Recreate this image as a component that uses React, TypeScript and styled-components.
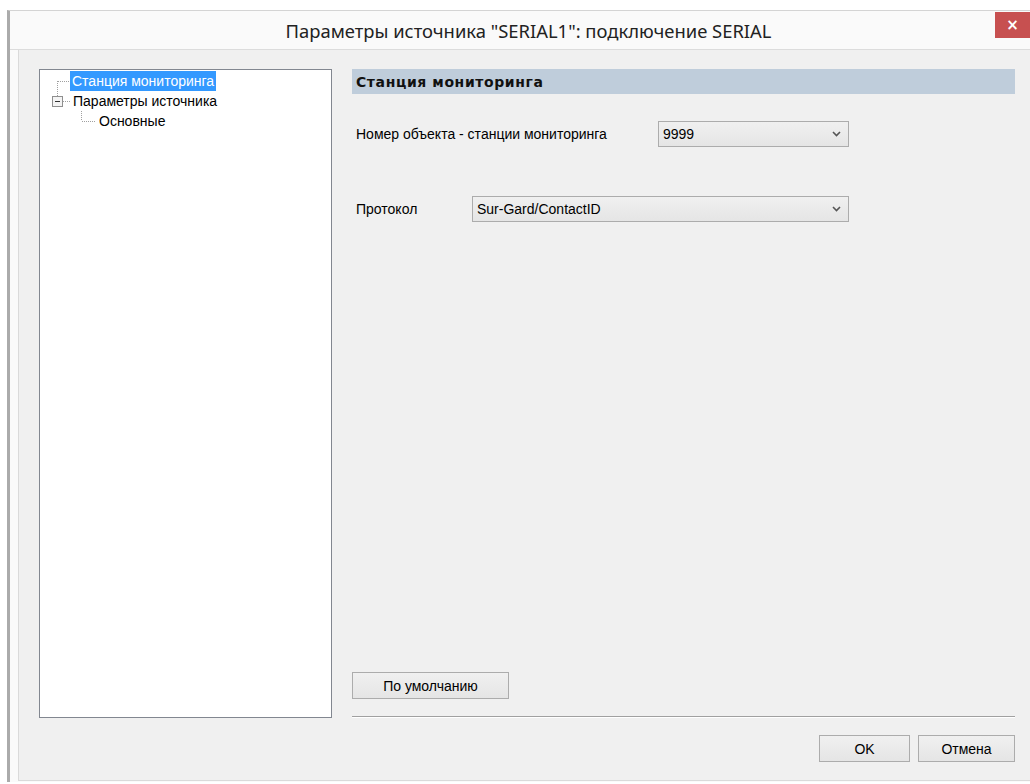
import styled, { createGlobalStyle } from "styled-components";

const GlobalStyle = createGlobalStyle`
  html, body {
    margin: 0;
    padding: 0;
    background: #ffffff;
  }
  body {
    font-family: "Liberation Sans", Arial, sans-serif;
    font-size: 14px;
    color: #000;
  }
`;

const Frame = styled.div`
  margin: 10px 0 0 7px;
  height: 771px;
  display: flex;
  flex-direction: column;
  border-left: 3px solid #ababab;
  border-top: 1px solid #d4d4d4;
  background: #fafafa;
  overflow: hidden;
`;

const TitleBar = styled.div`
  height: 38px;
  display: flex;
  align-items: flex-start;
  border-bottom: 1px solid #dcdcdc;
  background: #fafafa;
`;

const Title = styled.div`
  flex: 1;
  text-align: center;
  padding-left: 52px;
  line-height: 40px;
  font-family: "Noto Sans", "Open Sans", sans-serif;
  font-size: 18.4px;
  color: #222;
`;

const CloseButton = styled.div`
  width: 35px;
  height: 26px;
  margin-top: 1px;
  background: #c75050;
  color: #fff;
  display: flex;
  align-items: center;
  justify-content: center;
  font-family: "DejaVu Sans", sans-serif;
  font-size: 15px;
  font-weight: bold;
`;

const Body = styled.div`
  flex: 1;
  display: flex;
  padding: 0 0 1px 8px;
`;

const Panel = styled.div`
  flex: 1;
  display: grid;
  grid-template-columns: 293px 663px;
  grid-template-rows: 649px auto;
  column-gap: 20px;
  padding: 19px 0 0 20px;
  background: #f0f0f0;
  border-left: 1px solid #dadada;
  border-bottom: 1px solid #dadada;
`;

const Tree = styled.div`
  background: #fff;
  border: 1px solid #828790;
  padding: 1px 0 0 8px;
`;

const TreeRow = styled.div<{ $level: number }>`
  display: flex;
  align-items: center;
  height: 20px;
  padding-left: ${({ $level }) => $level * 22}px;
`;

const Connector = styled.svg`
  flex: none;
  display: block;
`;

const Label = styled.span<{ $selected?: boolean }>`
  padding: 0 2px 0 ${({ $selected }) => ($selected ? 2 : 3)}px;
  line-height: 20px;
  background: ${({ $selected }) => ($selected ? "#3399ff" : "transparent")};
  color: ${({ $selected }) => ($selected ? "#fff" : "#000")};
`;

const Content = styled.div`
  display: flex;
  flex-direction: column;
`;

const SectionHeader = styled.div`
  height: 25px;
  background: #bfcddb;
  padding-left: 4px;
  line-height: 26px;
  font-family: "DejaVu Sans", Verdana, sans-serif;
  font-size: 14px;
  letter-spacing: 0.6px;
  font-weight: bold;
  color: #111;
`;

const FieldRow = styled.div<{ $top: number }>`
  width: 497px;
  margin-top: ${({ $top }) => $top}px;
  display: flex;
  align-items: center;
  justify-content: space-between;
`;

const FieldLabel = styled.span`
  padding-left: 4px;
`;

const Combo = styled.div<{ $width: number }>`
  width: ${({ $width }) => $width}px;
  height: 26px;
  box-sizing: border-box;
  border: 1px solid #acacac;
  background: linear-gradient(#f0f0f0, #e5e5e5);
  display: flex;
  align-items: center;
  justify-content: space-between;
  padding: 0 7px 0 4px;
`;

const Spacer = styled.div`
  flex: 1;
`;

const Button = styled.div<{ $width: number }>`
  width: ${({ $width }) => $width}px;
  height: 27px;
  box-sizing: border-box;
  border: 1px solid #acacac;
  background: linear-gradient(#f0f0f0, #e5e5e5);
  display: flex;
  align-items: center;
  justify-content: center;
`;

const Separator = styled.div`
  margin-top: 17px;
  border-top: 1px solid #a0a0a0;
  border-bottom: 1px solid #fff;
`;

const Footer = styled.div`
  grid-column: 2;
  display: flex;
  justify-content: flex-end;
  gap: 8px;
  padding-top: 17px;
`;

const Chevron = () => (
  <svg width="9" height="6" viewBox="0 0 9 6">
    <path d="M1 1 L4.5 4.5 L8 1" fill="none" stroke="#555" strokeWidth="1.6" />
  </svg>
);

const dots = "1 1";

export default function App() {
  return (
    <>
      <GlobalStyle />
      <Frame>
        <TitleBar>
          <Title>Параметры источника "SERIAL1": подключение SERIAL</Title>
          <CloseButton>×</CloseButton>
        </TitleBar>
        <Body>
          <Panel>
            <Tree>
              <TreeRow $level={0}>
                <Connector width="22" height="20">
                  <line x1="9.5" y1="10" x2="9.5" y2="20" stroke="#a0a0a0" strokeDasharray={dots} />
                  <line x1="10" y1="10.5" x2="22" y2="10.5" stroke="#a0a0a0" strokeDasharray={dots} />
                </Connector>
                <Label $selected>Станция мониторинга</Label>
              </TreeRow>
              <TreeRow $level={0}>
                <Connector width="22" height="20">
                  <line x1="9.5" y1="0" x2="9.5" y2="5" stroke="#a0a0a0" strokeDasharray={dots} />
                  <rect x="4.5" y="5.5" width="10" height="10" fill="#f4f4f4" stroke="#8f8f8f" />
                  <line x1="7" y1="10.5" x2="12" y2="10.5" stroke="#333" />
                  <line x1="15" y1="10.5" x2="22" y2="10.5" stroke="#a0a0a0" strokeDasharray={dots} />
                </Connector>
                <Label>Параметры источника</Label>
              </TreeRow>
              <TreeRow $level={1}>
                <Connector width="26" height="20">
                  <line x1="11.5" y1="0" x2="11.5" y2="10" stroke="#a0a0a0" strokeDasharray={dots} />
                  <line x1="12" y1="10.5" x2="26" y2="10.5" stroke="#a0a0a0" strokeDasharray={dots} />
                </Connector>
                <Label>Основные</Label>
              </TreeRow>
            </Tree>

            <Content>
              <SectionHeader>Станция мониторинга</SectionHeader>
              <FieldRow $top={27}>
                <FieldLabel>Номер объекта - станции мониторинга</FieldLabel>
                <Combo $width={191}>
                  <span>9999</span>
                  <Chevron />
                </Combo>
              </FieldRow>
              <FieldRow $top={49}>
                <FieldLabel>Протокол</FieldLabel>
                <Combo $width={377}>
                  <span>Sur-Gard/ContactID</span>
                  <Chevron />
                </Combo>
              </FieldRow>
              <Spacer />
              <Button $width={157}>По умолчанию</Button>
              <Separator />
            </Content>

            <Footer>
              <Button $width={91}>OK</Button>
              <Button $width={97}>Отмена</Button>
            </Footer>
          </Panel>
        </Body>
      </Frame>
    </>
  );
}
